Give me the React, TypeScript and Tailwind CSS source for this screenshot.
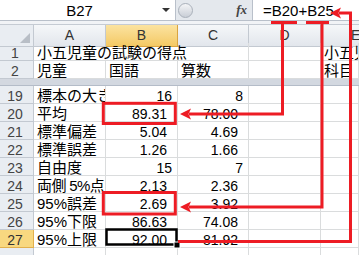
import React from 'react';

const grid = 'grid grid-cols-[34px_72px_72px_71px_72px_1fr]';
const font = 'font-["Liberation_Sans","Noto_Sans_CJK_JP",sans-serif]';

const rows = [
    { n: '19', a: '標本の大きさ', b: '16', c: '8' },
    { n: '20', a: '平均', b: '89.31', c: '78.00' },
    { n: '21', a: '標準偏差', b: '5.04', c: '4.69' },
    { n: '22', a: '標準誤差', b: '1.26', c: '1.66' },
    { n: '23', a: '自由度', b: '15', c: '7' },
    { n: '24', a: '両側 5%点', b: '2.13', c: '2.36' },
    { n: '25', a: '95%誤差', b: '2.69', c: '3.92' },
    { n: '26', a: '95%下限', b: '86.63', c: '74.08' },
    { n: '27', a: '95%上限', b: '92.00', c: '81.92' },
    // row 28 only peeks in at the bottom edge, its number sits below the fold
    { n: '', a: '', b: '', c: '' },
];

function RowHead({ n, active }: { n: string; active?: boolean }) {
    return (
        <div
            className={
                active
                    ? 'flex items-end justify-center pr-[3px] leading-none text-[14px] text-[#333] bg-[#f8d880] border-r border-b border-[#e2b04d]'
                    : 'flex items-end justify-center pr-[3px] leading-none text-[14px] text-[#444] bg-[#e9edf2] border-r border-b border-[#c3c9d1]'
            }
        >
            {n}
        </div>
    );
}

function Cell({ text, num }: { text: string; num?: boolean }) {
    if (num) {
        const pad = text.includes('.') ? 'pr-[10px]' : 'pr-[5px]';
        return (
            <div className={`flex items-end justify-end ${pad} leading-none text-[14px] text-black border-r border-b border-[#dadcdd] overflow-hidden`}>
                {text}
            </div>
        );
    }
    // 両側 5%点 is a touch wider than the column in this font
    const tight = text.includes(' ') ? 'tracking-[-0.6px]' : '';
    return (
        <div className={`flex items-end pl-[3px] leading-none text-[15px] text-black border-r border-b border-[#dadcdd] overflow-hidden whitespace-nowrap ${tight}`}>
            {text}
        </div>
    );
}

export default function App() {
    return (
        <div className={`relative w-[359px] h-[255px] overflow-hidden bg-white ${font}`}>
            {/* formula bar */}
            <div className="flex h-[21px] bg-[#e4e8ed] border-b border-[#b9c0ca]">
                <div className="relative flex items-center justify-center w-[176px] bg-white border-r border-[#b9c0ca] text-[15px] leading-none pr-[16px]">
                    B27
                    <span className="absolute right-[5px] top-[8px] w-0 h-0 border-l-[4px] border-r-[4px] border-t-[4px] border-l-transparent border-r-transparent border-t-[#333]" />
                </div>
                <div className="flex items-center pl-[2px]">
                    <div className="w-[15px] h-[15px] rounded-full bg-gradient-to-b from-[#f4f5f7] to-[#c9ced6] border border-[#a9b0ba]" />
                </div>
                <div className="flex-1 flex items-center justify-end pr-[5px] font-['Liberation_Serif',serif] italic font-bold text-[13px] text-[#444]">
                    fx
                </div>
                <div className="w-[107px] flex items-center pl-[10px] bg-white border-l border-[#b9c0ca] text-[15px] leading-none">
                    =B20+B25
                </div>
            </div>
            <div className="h-[4px] bg-[#f1f3f6] border-b border-[#c5cbd3]" />

            {/* column headers */}
            <div className={`${grid} h-[18px] text-[14px] text-[#333]`}>
                <div className="relative bg-[#e9edf2] border-r border-b border-[#c3c9d1]">
                    <svg className="absolute right-[3px] bottom-[3px]" width="10" height="10">
                        <polygon points="10,0 10,10 0,10" fill="#b8bec6" />
                    </svg>
                </div>
                <div className="flex items-center justify-center bg-gradient-to-b from-[#f5f7f9] to-[#e2e6ec] border-r border-b border-[#c3c9d1]">A</div>
                <div className="flex items-center justify-center bg-gradient-to-b from-[#fbe3a0] to-[#f4c963] border-r border-b border-[#d9a441]">B</div>
                <div className="flex items-center justify-center bg-gradient-to-b from-[#f5f7f9] to-[#e2e6ec] border-r border-b border-[#c3c9d1]">C</div>
                <div className="flex items-center justify-center bg-gradient-to-b from-[#f5f7f9] to-[#e2e6ec] border-r border-b border-[#c3c9d1]">D</div>
                <div className="flex items-center pl-[30px] bg-gradient-to-b from-[#f5f7f9] to-[#e2e6ec] border-b border-[#c3c9d1]">E</div>
            </div>

            {/* rows 1-2 */}
            <div className={`${grid} h-[18px]`}>
                <RowHead n="1" />
                <div className="col-span-3 flex items-end pl-[3px] leading-none text-[15px] whitespace-nowrap border-r border-b border-[#dadcdd]">
                    小五児童の試験の得点
                </div>
                <Cell text="" />
                <Cell text="小五児童の試験の得点" />
            </div>
            <div className={`${grid} h-[18px]`}>
                <RowHead n="2" />
                <Cell text="児童" />
                <Cell text="国語" />
                <Cell text="算数" />
                <Cell text="" />
                <Cell text="科目" />
            </div>

            {/* frozen pane split */}
            <div className="h-[7px] bg-[#d3d8e0] border-b border-[#b4bcc8]" />

            {rows.map((r, i) => (
                <div key={i} className={`${grid} h-[18px]`}>
                    <RowHead n={r.n} active={r.n === '27'} />
                    <Cell text={r.a} />
                    <Cell text={r.b} num />
                    <Cell text={r.c} num />
                    <Cell text="" />
                    <Cell text="" />
                </div>
            ))}

            {/* annotations */}
            <svg className="absolute inset-0 pointer-events-none" width="359" height="255">
                <rect x="106.5" y="229.5" width="70" height="15" fill="none" stroke="#000" strokeWidth="2.5" />
                <rect x="174" y="242" width="6" height="6" fill="#000" stroke="#fff" strokeWidth="1" />
                <g stroke="#ed1c24" strokeWidth="3" fill="none">
                    <rect x="103.3" y="103.3" width="72" height="20.2" />
                    <rect x="103.3" y="192.5" width="72" height="21.5" />
                    <path d="M271 22.5H297M306 22.5H329" />
                    <path d="M282.5 22.5V114H189" />
                    <path d="M322 22.5V207H189" />
                    <path d="M178 241.5H350.5V13H339" />
                </g>
                <g fill="#ed1c24">
                    <polygon points="180,114 191,108.5 188.5,114 191,119.5" />
                    <polygon points="180,207 191,201.5 188.5,207 191,212.5" />
                    <polygon points="330,13 341,7.5 338.5,13 341,18.5" />
                </g>
            </svg>
        </div>
    );
}
